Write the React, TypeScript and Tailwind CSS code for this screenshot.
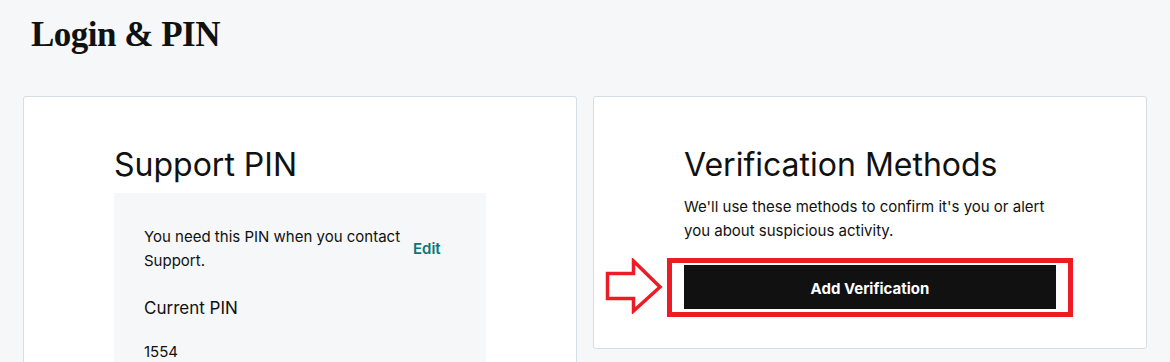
const sans = "font-['Inter',_'Liberation_Sans',_sans-serif]";

const PinPanel = () => {
  return (
    <div className="rounded-[3px] border border-[#d6dde3] bg-white pt-12 pb-16">
      <div className="w-[372px] mx-auto">
        <h2 className="text-[32px] leading-10 text-[#111]">Support PIN</h2>
        <div className="mt-2 bg-[#f5f7f8] px-[30px] pt-8 pb-10">
          <div className="flex items-center">
            <p className="w-[264px] text-[15px] leading-6 text-[#111]">
              You need this PIN when you contact Support.
            </p>
            <button className="ml-[5px] text-[15px] font-semibold text-[#09757a]">Edit</button>
          </div>
          <div className="mt-[23px] text-[17px] leading-6 text-[#111]">Current PIN</div>
          <div className="mt-5 text-[15px] leading-6 text-[#111]">1554</div>
        </div>
      </div>
    </div>
  )
}

const VerificationPanel = () => {
  return (
    <div className="rounded-[3px] border border-[#d6dde3] bg-white pt-12 pb-[39px]">
      <div className="w-[372px] mx-auto">
        <h2 className="text-[32px] leading-10 text-[#111]">Verification Methods</h2>
        <p className="mt-[10px] text-[15px] leading-6 text-[#111]">
          We'll use these methods to confirm it's you or alert you about suspicious activity.
        </p>
        <div className="relative mt-[22px]">
          {/* annotation overlay */}
          <svg className="absolute -left-[79px] -top-[7px]" width="58" height="56" viewBox="0 0 58 56">
            <path d="M2.5 15.5 H28.5 V3 L55 29 L28.5 53 V40.5 H2.5 Z" fill="none" stroke="#ed1c24" strokeWidth="3.5" strokeLinejoin="miter" />
          </svg>
          <div className="absolute -left-[17px] -right-[17px] -top-[7px] -bottom-[8px] border-[5px] border-[#ed1c24]" />
          <button className="relative w-full h-11 pt-1 bg-[#111] text-white text-[15px] font-bold">
            Add Verification
          </button>
        </div>
      </div>
    </div>
  )
}

export default function App() {
  return (
    <div className={`min-h-screen bg-[#f5f7f8] ${sans}`}>
      <h1 className="pt-[15px] pl-[31px] font-['Liberation_Serif',_serif] font-bold text-[35px] leading-10 tracking-[-0.5px] text-[#111]">
        Login &amp; PIN
      </h1>
      <div className="mt-[41px] px-[23px] grid grid-cols-2 gap-4 items-start">
        <PinPanel />
        <VerificationPanel />
      </div>
    </div>
  )
}
